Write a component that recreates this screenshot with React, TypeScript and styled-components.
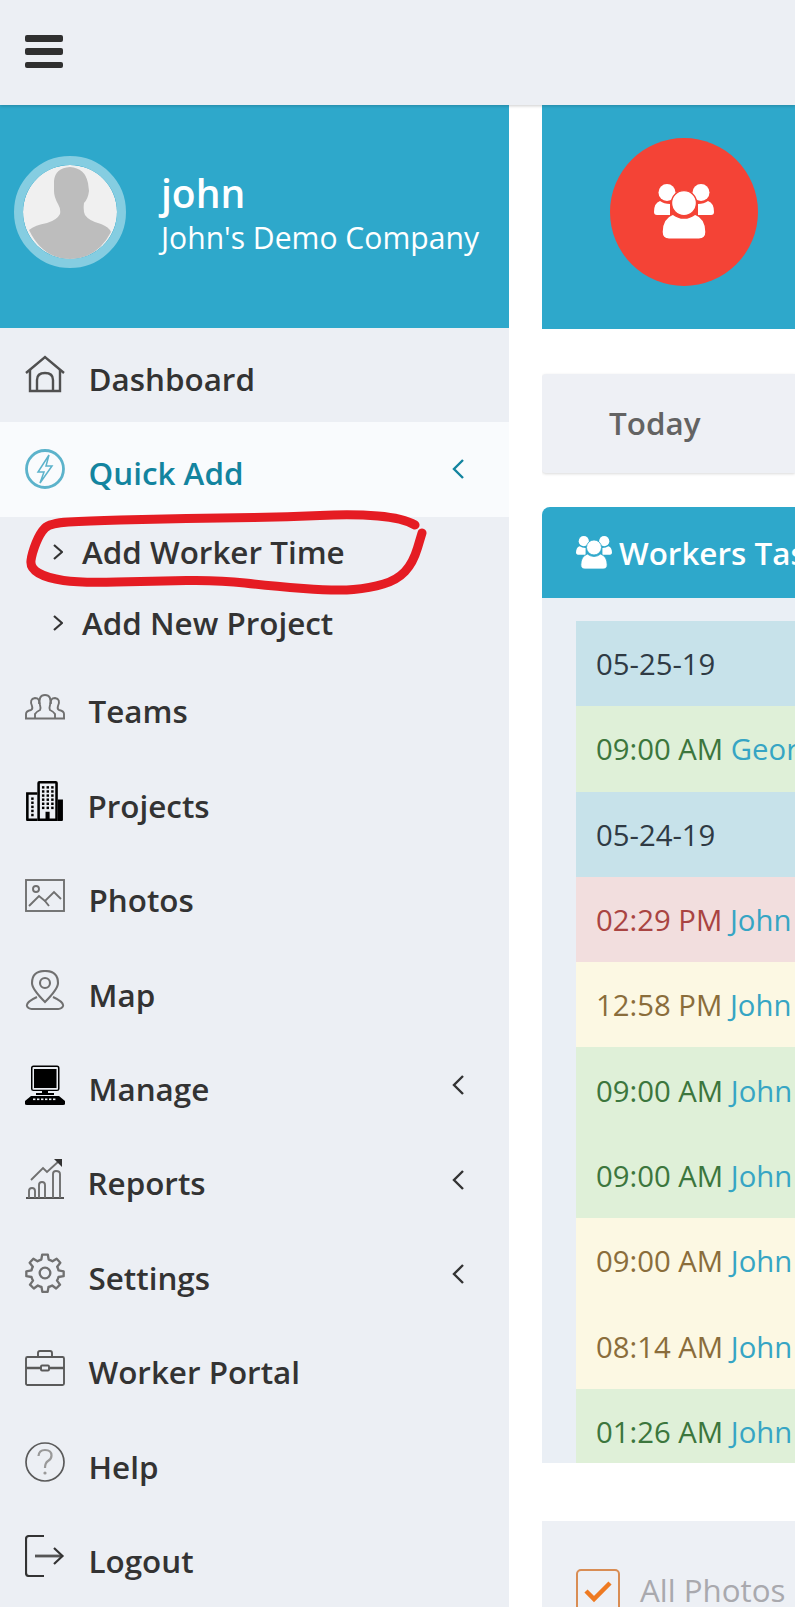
import React from 'react';
import styled, { createGlobalStyle } from 'styled-components';

const GlobalStyle = createGlobalStyle`
  html, body {
    margin: 0;
    padding: 0;
    background: #fff;
  }
  body {
    font-family: "Open Sans", "Liberation Sans", sans-serif;
    color: #333;
  }
`;

const HomeIcon = () => (
  <svg width="40" height="38" viewBox="0 0 40 38" fill="none" stroke="#505050" strokeWidth="2.4">
    <path d="M1 18 L20 2 L39 18" />
    <path d="M5 15 V36 H35 V15" />
    <path d="M12 36 V25 Q12 18 20 18 Q28 18 28 25 V36" />
  </svg>
);

const BoltIcon = () => (
  <svg width="40" height="42" viewBox="0 0 40 42" fill="none" stroke="#5cb3cb" strokeWidth="2">
    <circle cx="20" cy="21" r="18.5" strokeWidth="2.8" />
    <path d="M24 7 L13 24 H19 L15 35 L27 18 H21 Z" strokeWidth="1.5" />
  </svg>
);

const TeamsIcon = () => (
  <svg width="40" height="26" viewBox="0 0 40 26" fill="none" stroke="#707070" strokeWidth="1.9">
    <path d="M1 24 V20 Q1 17 6 16 Q8 15 7 12 Q4 5 10 4 Q15 4 14 10" />
    <path d="M39 24 V20 Q39 17 34 16 Q32 15 33 12 Q36 5 30 4 Q25 4 26 10" />
    <path d="M10 24 V20 Q11 18 15 16 Q16 14 15 11 Q13 1 20 1 Q27 1 25 11 Q24 14 25 16 Q29 18 30 20 V24" />
    <path d="M0 24.5 H40" />
  </svg>
);

const BuildingIcon = () => (
  <svg width="39" height="42" viewBox="0 0 38 41" fill="#000">
    <path d="M12 3 Q12 1 14 1 H30 Q32 1 32 3 V40 H12 Z M14.5 3.5 V37.5 H20 V31 H24 V37.5 H29.5 V3.5 Z" fillRule="evenodd" />
    <path d="M1 12 H12 V14.5 H3.5 V37.5 H12 V40 H2 Q1 40 1 39 Z" />
    <path d="M32 19 H37 V39 Q37 40 36 40 H32 Z" />
    {[6, 10, 14, 18, 22, 26].map(y =>
      [16.5, 21, 25.5].map(x => <rect key={`${x}-${y}`} x={x} y={y} width="2.4" height="2.4" />)
    )}
    {[17, 21, 25, 29, 33].map(y => <rect key={y} x="6" y={y} width="2.4" height="2.4" />)}
  </svg>
);

const PhotoIcon = () => (
  <svg width="40" height="33" viewBox="0 0 40 33" fill="none" stroke="#707070" strokeWidth="1.9">
    <rect x="1" y="1" width="38" height="31" />
    <circle cx="11" cy="10" r="3" />
    <path d="M4 27 L14 17 L20 22 L29 13 L36 20" />
    <path d="M20 22 L24 27" />
  </svg>
);

const MapIcon = () => (
  <svg width="40" height="40" viewBox="0 0 40 40" fill="none" stroke="#707070" strokeWidth="2.1">
    <path d="M20 32 Q7 19 7 13 Q7 1 20 1 Q33 1 33 13 Q33 19 20 32 Z" />
    <circle cx="20" cy="13" r="5" />
    <path d="M12 27 Q1 32 2 36 Q3 39 8 39 H32 Q37 39 38 36 Q39 32 28 27" />
  </svg>
);

const ComputerIcon = () => (
  <svg width="40" height="40" viewBox="0 0 40 40" fill="#000">
    <path d="M6 3 Q6 0.5 8.5 0.5 H32 Q34.5 0.5 34.5 3 V24 Q34.5 26 32 26 H8.5 Q6 26 6 24 Z M7.5 3 V24 Q7.5 24.7 8.5 24.7 H32 Q33 24.7 33 24 V3 Q33 2 32 2 H8.5 Q7.5 2 7.5 3 Z" fillRule="evenodd" />
    <rect x="9" y="4" width="22.5" height="19" />
    <rect x="17" y="26" width="6" height="3" />
    <rect x="11" y="28" width="18" height="2" />
    <path d="M6 31 H34 L40 36 V39 Q40 40 38 40 H2 Q0 40 0 39 V36 Z" />
    {[8, 12, 16, 20, 24, 28].map(x => <rect key={x} x={x} y="33.5" width="2.4" height="1.6" fill="#eceff4" />)}
  </svg>
);

const ReportsIcon = () => (
  <svg width="38" height="41" viewBox="0 0 38 41" fill="none" stroke="#707070" strokeWidth="1.9">
    <path d="M0 40 H38" strokeWidth="2" stroke="#555" />
    <path d="M3 40 V33 Q3 30 6 30 Q9 30 9 33 V40" />
    <path d="M13 40 V27 Q13 24 16 24 Q19 24 19 27 V40" />
    <path d="M27 40 V16 Q27 13 30 13 Q34 13 34 16 V40" />
    <path d="M5 22 L17 10 L21 14 L33 3" />
    <path d="M28 1 H36 V9 Z" fill="#333" stroke="none" />
  </svg>
);

const GearIcon = () => (
  <svg width="40" height="40" viewBox="0 0 24 24" fill="none" stroke="#707070" strokeWidth="1.4" strokeLinejoin="round">
    <circle cx="12" cy="12" r="3.2" />
    <path d="M10.3 1 H13.7 L14.2 4 Q15.5 4.4 16.5 5 L19 3.4 L21.2 5.8 L19.3 8.2 Q19.9 9.3 20.1 10.4 L23.2 11 V13.9 L20.1 14.4 Q19.8 15.6 19.2 16.6 L21 19 L18.7 21.3 L16.3 19.5 Q15.3 20.1 14.1 20.4 L13.6 23.3 H10.4 L9.9 20.4 Q8.7 20.1 7.7 19.5 L5.3 21.3 L3 19 L4.8 16.6 Q4.2 15.6 3.9 14.4 L0.8 13.9 V11 L3.9 10.4 Q4.1 9.3 4.7 8.2 L2.8 5.8 L5 3.4 L7.5 5 Q8.5 4.4 9.8 4 Z" />
  </svg>
);

const BriefcaseIcon = () => (
  <svg width="40" height="36" viewBox="0 0 40 36" fill="none" stroke="#5a5a5a" strokeWidth="1.9">
    <rect x="1" y="7" width="38" height="28" rx="1.5" />
    <path d="M13 7 V3 Q13 1 15 1 H25 Q27 1 27 3 V7" />
    <path d="M1 18 H16 M24 18 H39" strokeWidth="2.6" />
    <rect x="16" y="15.5" width="8" height="5" rx="1" />
  </svg>
);

const HelpIcon = () => (
  <svg width="40" height="40" viewBox="0 0 40 40" fill="none" stroke="#5a5a5a" strokeWidth="1.7">
    <circle cx="20" cy="20" r="19" />
    <path d="M13.5 14 Q14 8 20 8 Q26.5 8 26.5 13.5 Q26.5 17 23 19 Q20 21 20 26" stroke="#999" strokeWidth="2.2" />
    <circle cx="20" cy="31" r="1.6" fill="#999" stroke="none" />
  </svg>
);

const LogoutIcon = () => (
  <svg width="40" height="42" viewBox="0 0 40 42" fill="none" stroke="#333" strokeWidth="2.2">
    <path d="M19 1 H4 Q1 1 1 4 V38 Q1 41 4 41 H19" />
    <path d="M10 21 H37" strokeWidth="2.8" stroke="#555" />
    <path d="M29 13 L37.5 21 L29 29" />
  </svg>
);

const PeopleGlyph = ({ size, outline }: { size: number; outline: string }) => (
  <svg width={size} height={size * 0.92} viewBox="0 0 60 55" fill="#fff" style={{ flex: 'none' }}>
    <circle cx="13" cy="8.5" r="8.5" />
    <circle cx="47" cy="8.5" r="8.5" />
    <path d="M6 17 Q0 19 0 28 Q0 31 3 31 H16 V20 Q10 20 6 17 Z" />
    <path d="M54 17 Q60 19 60 28 Q60 31 57 31 H44 V20 Q50 20 54 17 Z" />
    <path d="M19 30 Q24 34 30 34 Q36 34 41 30 Q52 34 52 48 Q52 55 45 55 H15 Q8 55 8 48 Q8 34 19 30 Z" stroke={outline} strokeWidth="1.4" />
    <circle cx="30" cy="19" r="12.5" stroke={outline} strokeWidth="1.4" />
  </svg>
);

const AvatarFigure = () => (
  <svg width="94" height="94" viewBox="0 0 94 94">
    <circle cx="47" cy="47" r="47" fill="#f0f0f0" />
    <path d="M31 16 Q32 3 47 2 Q62 3 65 18 L66 26 Q65 34 61 38 Q60 46 62 50 Q66 56 78 59 Q86 62 88 67 Q74 94 47 94 Q20 94 6 65 Q12 60 24 58 Q34 55 37 49 Q38 44 35 39 Q31 32 31 26 Z" fill="#bdbdbd" />
  </svg>
);

const Page = styled.div`
  position: relative;
  width: 795px;
  height: 1607px;
  overflow: hidden;
  background: #fff;
`;

const TopBar = styled.header`
  height: 105px;
  display: flex;
  align-items: center;
  padding-left: 25px;
  box-sizing: border-box;
  background: #eceff4;
  box-shadow: 0 1px 3px rgba(0, 0, 0, 0.2);
  position: relative;
  z-index: 2;
`;

const Burger = styled.div`
  width: 38px;
  height: 33px;
  display: flex;
  flex-direction: column;
  justify-content: space-between;
  margin-top: -2px;
`;

const BurgerBar = styled.span`
  height: 6.5px;
  border-radius: 2px;
  background: #303030;
`;

const Columns = styled.div`
  display: flex;
  gap: 33px;
  height: 1502px;
`;

const Sidebar = styled.aside`
  position: relative;
  flex: 0 0 509px;
  background: #eceff4;
`;

const Profile = styled.div`
  height: 223px;
  display: flex;
  align-items: center;
  gap: 35px;
  padding: 0 0 9px 14px;
  box-sizing: border-box;
  background: #2ea8cb;
  color: #fff;
`;

const AvatarRing = styled.div`
  width: 112px;
  height: 112px;
  box-sizing: border-box;
  border: 9px solid #85cde1;
  border-radius: 50%;
  overflow: hidden;
  flex: none;
`;

const ProfileText = styled.div`
  display: flex;
  flex-direction: column;
  padding-top: 4px;
`;

const ProfileName = styled.div`
  font-size: 39px;
  line-height: 46px;
  font-weight: 600;
`;

const ProfileCompany = styled.div`
  font-size: 30.1px;
  line-height: 42px;
  white-space: nowrap;
  margin-top: 1px;
`;

const NavRow = styled.div<{ $active?: boolean }>`
  position: relative;
  height: 94.4px;
  display: flex;
  align-items: center;
  padding: 0 0 0 25px;
  box-sizing: border-box;
  background: ${({ $active }) => ($active ? '#f9fbfd' : 'transparent')};
  color: ${({ $active }) => ($active ? '#13849f' : '#333')};
`;

const NavIcon = styled.span`
  flex: 0 0 39px;
  height: 44px;
  display: flex;
  align-items: center;
  justify-content: center;
  margin-top: -2px;
`;

const NavLabel = styled.span`
  margin-left: 23.5px;
  font-size: 31.4px;
  font-weight: 600;
  line-height: 44px;
  padding-top: 7px;
`;

const NavCaret = styled.svg`
  position: absolute;
  left: 451px;
  top: 36px;
  stroke: currentColor;
`;

const SubMenu = styled.div`
  height: 144px;
  box-sizing: border-box;
`;

const SubRow = styled.div`
  height: 71px;
  display: flex;
  align-items: center;
  padding-left: 53px;
  color: #333;
`;

const SubLabel = styled.span`
  margin-left: 19px;
  font-size: 31.4px;
  font-weight: 600;
  line-height: 44px;
`;

const Scribble = styled.svg`
  position: absolute;
  left: 0;
  top: 400px;
  pointer-events: none;
`;

const Main = styled.main`
  flex: 1;
  min-width: 0;
  overflow: hidden;
`;

const Hero = styled.div`
  height: 224px;
  display: flex;
  align-items: center;
  padding: 0 0 10px 68px;
  box-sizing: border-box;
  background: #2ea8cb;
`;

const HeroCircle = styled.div`
  width: 148px;
  height: 148px;
  display: flex;
  align-items: center;
  justify-content: center;
  border-radius: 50%;
  background: #f44336;
`;

const TodayCard = styled.div`
  margin-top: 45px;
  height: 99px;
  display: flex;
  align-items: center;
  padding: 0 0 3px 67px;
  box-sizing: border-box;
  background: #eef0f5;
  border-radius: 4px 0 0 4px;
  box-shadow: 0 1px 3px rgba(0, 0, 0, 0.15);
  font-size: 31.4px;
  font-weight: 600;
  color: #636363;
`;

const PanelHeader = styled.div`
  margin-top: 34px;
  height: 91px;
  display: flex;
  align-items: center;
  gap: 7px;
  padding-left: 34px;
  box-sizing: border-box;
  background: #2ea8cb;
  border-radius: 8px 0 0 0;
  color: #fff;
  font-size: 31.4px;
  font-weight: 600;
  white-space: nowrap;
`;

const PanelBody = styled.div`
  height: 865px;
  padding: 23px 0 0 34px;
  box-sizing: border-box;
  background: #eaeff5;
  overflow: hidden;
`;

const palette = {
  info: { bg: '#c7e2ea', fg: '#2f3a44' },
  success: { bg: '#dff0d8', fg: '#3c763d' },
  danger: { bg: '#f2dede', fg: '#a94442' },
  warning: { bg: '#fcf8e3', fg: '#8a6d3b' },
};

type Tone = keyof typeof palette;

const FeedRow = styled.div<{ $tone: Tone }>`
  height: 85.3px;
  display: flex;
  align-items: center;
  padding: 1px 0 0 20px;
  box-sizing: border-box;
  background: ${({ $tone }) => palette[$tone].bg};
  color: ${({ $tone }) => palette[$tone].fg};
  font-size: 29.3px;
  line-height: 40px;
  white-space: pre;
`;

const WorkerLink = styled.span`
  color: #36a5c4;
`;

const FilterCard = styled.div`
  margin-top: 58px;
  height: 86px;
  display: flex;
  align-items: flex-start;
  padding: 48px 0 0 34px;
  box-sizing: border-box;
  background: #edf0f5;
`;

const CheckBox = styled.span`
  flex: none;
  width: 44px;
  height: 44px;
  display: flex;
  align-items: center;
  justify-content: center;
  box-sizing: border-box;
  border: 2px solid #d98d54;
  border-radius: 5px;
`;

const FilterLabel = styled.span`
  margin-left: 20px;
  margin-top: -1px;
  font-size: 31.3px;
  line-height: 44px;
  color: #a9a9ae;
  white-space: nowrap;
`;

const Caret = () => (
  <NavCaret width="14" height="22" viewBox="0 0 14 22" fill="none" strokeWidth="2.4">
    <path d="M12 2 L3 11 L12 20" />
  </NavCaret>
);

const SubCaret = () => (
  <svg width="10" height="18" viewBox="0 0 10 18" fill="none" stroke="#333" strokeWidth="2.2">
    <path d="M1 2 L9 9 L1 16" />
  </svg>
);

// pen stroke of the red hand-drawn ring, traced from the screenshot
const ringPoints = [
  [415, 20], [403, 13], [353, 9], [287, 12], [220, 13], [153, 14], [87, 16], [50, 18], [40, 28],
  [32, 48], [30, 63], [47, 73], [80, 78], [153, 76], [220, 75], [270, 81], [337, 86], [370, 83],
  [397, 75], [413, 58], [422, 28],
];

const smoothPath = (pts: number[][]) => {
  let d = `M${pts[0][0]} ${pts[0][1]}`;
  for (let i = 1; i < pts.length - 1; i++) {
    const mx = (pts[i][0] + pts[i + 1][0]) / 2;
    const my = (pts[i][1] + pts[i + 1][1]) / 2;
    d += ` Q${pts[i][0]} ${pts[i][1]} ${mx} ${my}`;
  }
  const last = pts[pts.length - 1];
  return `${d} L${last[0]} ${last[1]}`;
};

const feed: { tone: Tone; time: string; who?: string }[] = [
  { tone: 'info', time: '05-25-19' },
  { tone: 'success', time: '09:00 AM', who: 'George' },
  { tone: 'info', time: '05-24-19' },
  { tone: 'danger', time: '02:29 PM', who: 'John' },
  { tone: 'warning', time: '12:58 PM', who: 'John' },
  { tone: 'success', time: '09:00 AM', who: 'John' },
  { tone: 'success', time: '09:00 AM', who: 'John' },
  { tone: 'warning', time: '09:00 AM', who: 'John' },
  { tone: 'warning', time: '08:14 AM', who: 'John' },
  { tone: 'success', time: '01:26 AM', who: 'John' },
];

export default function App() {
  return (
    <Page>
      <GlobalStyle />
      <TopBar>
        <Burger>
          <BurgerBar />
          <BurgerBar />
          <BurgerBar />
        </Burger>
      </TopBar>
      <Columns>
        <Sidebar>
          <Profile>
            <AvatarRing>
              <AvatarFigure />
            </AvatarRing>
            <ProfileText>
              <ProfileName>john</ProfileName>
              <ProfileCompany>John's Demo Company</ProfileCompany>
            </ProfileText>
          </Profile>
          <NavRow>
            <NavIcon><HomeIcon /></NavIcon>
            <NavLabel>Dashboard</NavLabel>
          </NavRow>
          <NavRow $active>
            <NavIcon><BoltIcon /></NavIcon>
            <NavLabel>Quick Add</NavLabel>
            <Caret />
          </NavRow>
          <SubMenu>
            <SubRow>
              <SubCaret />
              <SubLabel>Add Worker Time</SubLabel>
            </SubRow>
            <SubRow>
              <SubCaret />
              <SubLabel>Add New Project</SubLabel>
            </SubRow>
          </SubMenu>
          <NavRow>
            <NavIcon><TeamsIcon /></NavIcon>
            <NavLabel>Teams</NavLabel>
          </NavRow>
          <NavRow>
            <NavIcon><BuildingIcon /></NavIcon>
            <NavLabel>Projects</NavLabel>
          </NavRow>
          <NavRow>
            <NavIcon><PhotoIcon /></NavIcon>
            <NavLabel>Photos</NavLabel>
          </NavRow>
          <NavRow>
            <NavIcon><MapIcon /></NavIcon>
            <NavLabel>Map</NavLabel>
          </NavRow>
          <NavRow>
            <NavIcon><ComputerIcon /></NavIcon>
            <NavLabel>Manage</NavLabel>
            <Caret />
          </NavRow>
          <NavRow>
            <NavIcon><ReportsIcon /></NavIcon>
            <NavLabel>Reports</NavLabel>
            <Caret />
          </NavRow>
          <NavRow>
            <NavIcon><GearIcon /></NavIcon>
            <NavLabel>Settings</NavLabel>
            <Caret />
          </NavRow>
          <NavRow>
            <NavIcon><BriefcaseIcon /></NavIcon>
            <NavLabel>Worker Portal</NavLabel>
          </NavRow>
          <NavRow>
            <NavIcon><HelpIcon /></NavIcon>
            <NavLabel>Help</NavLabel>
          </NavRow>
          <NavRow>
            <NavIcon><LogoutIcon /></NavIcon>
            <NavLabel>Logout</NavLabel>
          </NavRow>
          <Scribble width="509" height="100" viewBox="0 0 509 100" fill="none" stroke="#e51c23" strokeWidth="9" strokeLinecap="round" strokeLinejoin="round">
            <path d={smoothPath(ringPoints)} />
          </Scribble>
        </Sidebar>
        <Main>
          <Hero>
            <HeroCircle>
              <PeopleGlyph size={60} outline="#f44336" />
            </HeroCircle>
          </Hero>
          <TodayCard>Today</TodayCard>
          <PanelHeader>
            <PeopleGlyph size={36} outline="#2ea8cb" />
            Workers Tasks
          </PanelHeader>
          <PanelBody>
            {feed.map((item, i) => (
              <FeedRow key={i} $tone={item.tone}>
                {item.time}
                {item.who && <WorkerLink> {item.who}</WorkerLink>}
              </FeedRow>
            ))}
          </PanelBody>
          <FilterCard>
            <CheckBox>
              <svg width="30" height="24" viewBox="0 0 30 24" fill="none" stroke="#ee7a22" strokeWidth="4.5">
                <path d="M3 12 L11 20 L27 4" />
              </svg>
            </CheckBox>
            <FilterLabel>All Photos</FilterLabel>
          </FilterCard>
        </Main>
      </Columns>
    </Page>
  );
}
